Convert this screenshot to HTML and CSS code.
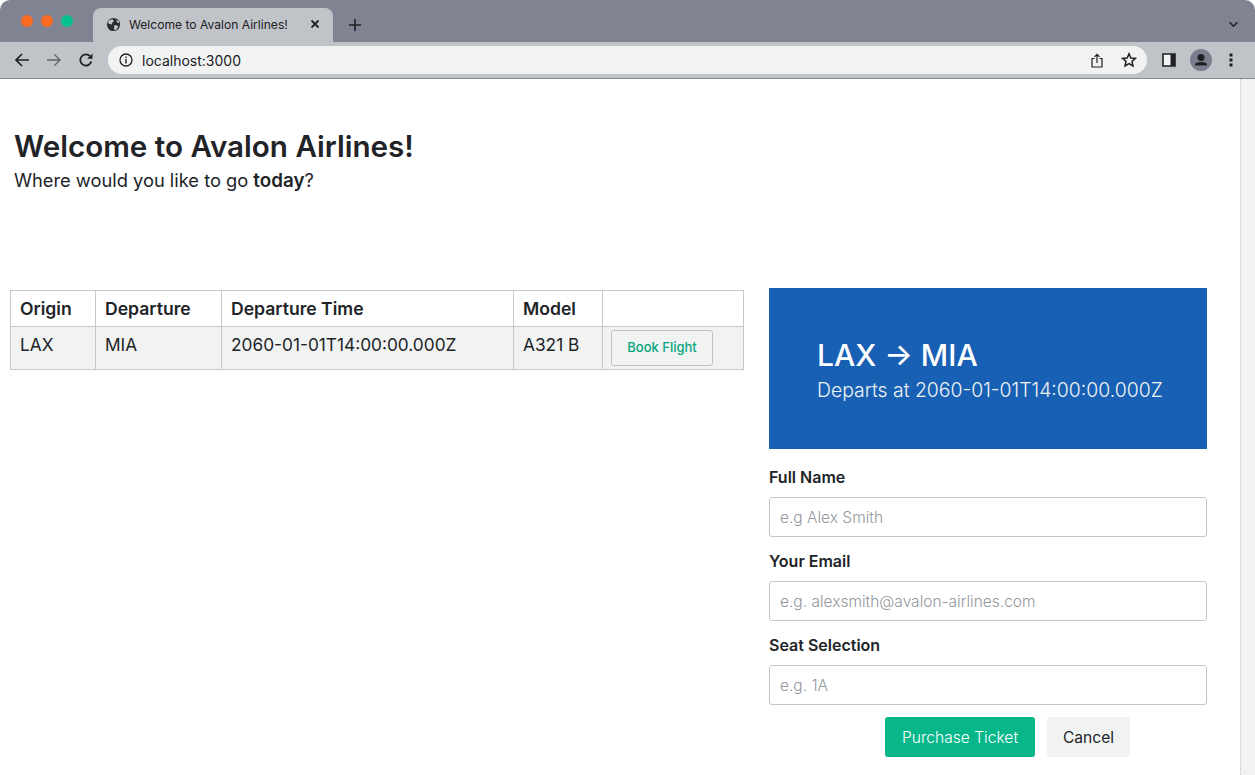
FILE: index.html
```html
<!DOCTYPE html>
<html lang="en">
<head>
<meta charset="utf-8">
<title>Welcome to Avalon Airlines!</title>
<link rel="stylesheet" href="styles.css">
</head>
<body>
<div class="window">
  <header class="chrome">
    <div class="tabstrip">
      <div class="lights"><span class="light orange"></span><span class="light orange"></span><span class="light green"></span></div>
      <div class="tab">
        <svg class="globe" viewBox="0 0 16 16"><circle cx="8" cy="8" r="7" fill="#2b2d30"/><path d="M3 3.500 7 2.500 8.500 4.500 6.500 6 6.500 8 3.500 7.500 2 6Z M9 8.500 12 9 13 10.500 11 13.500 9 14 8.500 11.500Z M11 3 13.500 4.500 14 6.500 12 6Z" fill="#c0c3c8"/></svg>
        <span class="tab-title">Welcome to Avalon Airlines!</span>
        <svg class="tab-close" viewBox="0 0 10 10"><path d="M1.500 1.500 8.500 8.500M8.500 1.500 1.500 8.500" stroke="#202124" stroke-width="1.800" fill="none"/></svg>
      </div>
      <svg class="newtab" viewBox="0 0 14 14"><path d="M7 1V13M1 7H13" stroke="#202124" stroke-width="1.600" fill="none"/></svg>
      <svg class="chevron" viewBox="0 0 12 8"><path d="M1.500 1.500 6 6 10.500 1.500" stroke="#202124" stroke-width="1.700" fill="none"/></svg>
    </div>
    <div class="toolbar">
      <svg class="navicon first" viewBox="0 0 16 16"><path d="M15 8H2M8 2 2 8 8 14" stroke="#202124" stroke-width="1.700" fill="none"/></svg>
      <svg class="navicon" viewBox="0 0 16 16"><path d="M1 8H14M8.500 2.500 14 8 8.500 13.500" stroke="#5f6368" stroke-width="1.300" fill="none"/></svg>
      <svg class="navicon" viewBox="0 0 16 16"><path d="M13.300 9.500A5.600 5.600 0 1 1 12 4.200" stroke="#202124" stroke-width="1.800" fill="none"/><path d="M14.500 1.500V6.800H9.200Z" fill="#202124"/></svg>
      <div class="omnibox">
        <svg class="info" viewBox="0 0 14 14"><circle cx="7" cy="7" r="6" stroke="#202124" stroke-width="1.300" fill="none"/><path d="M7 6V10.500M7 3.500V5" stroke="#202124" stroke-width="1.400" fill="none"/></svg>
        <span class="url">localhost:3000</span>
        <svg class="share" viewBox="0 0 12 15"><path d="M3.500 5.500H1V14H11V5.500H8.500M6 10V1.500M3.500 3.800 6 1.300 8.500 3.800" stroke="#202124" stroke-width="1.200" fill="none"/></svg>
        <svg class="star" viewBox="0 0 16 16"><path d="M8 1.800 9.800 6 14.500 6.400 11 9.400 12 14 8 11.600 4 14 5 9.400 1.500 6.400 6.200 6Z" stroke="#202124" stroke-width="1.500" fill="none"/></svg>
      </div>
      <svg class="panel" viewBox="0 0 14 14"><path d="M1 1H13V13H1Z" stroke="#202124" stroke-width="1.600" fill="#f1f3f3"/><path d="M8.500 1H13V13H8.500Z" fill="#202124"/></svg>
      <svg class="avatar" viewBox="0 0 22 22"><circle cx="11" cy="11" r="11" fill="#7a7f8e"/><circle cx="11" cy="8.500" r="3.500" fill="#202124"/><path d="M5 16.500C5 13.500 8 13 11 13S17 13.500 17 16.500Z" fill="#202124"/></svg>
      <svg class="menu" viewBox="0 0 4 14"><path d="M.5 .5H3.500V3.500H.5ZM.5 5.500H3.500V8.500H.5ZM.5 10.500H3.500V13.500H.5Z" fill="#202124"/></svg>
    </div>
  </header>
  <div class="viewport">
    <main class="page">
      <section class="hero">
        <h1 class="title">Welcome to Avalon Airlines!</h1>
        <p class="subtitle">Where would you like to go <strong>today</strong>?</p>
      </section>
      <div class="columns">
        <div class="flights">
          <table class="table">
            <colgroup><col class="c1"><col class="c2"><col class="c3"><col class="c4"><col class="c5"></colgroup>
            <thead><tr><th>Origin</th><th>Departure</th><th>Departure Time</th><th>Model</th><th></th></tr></thead>
            <tbody><tr><td>LAX</td><td>MIA</td><td>2060-01-01T14:00:00.000Z</td><td>A321 B</td><td class="action-cell"><button class="book" type="button">Book Flight</button></td></tr></tbody>
          </table>
        </div>
        <aside class="booking">
          <div class="banner">
            <h2 class="route">LAX → MIA</h2>
            <p class="departs">Departs at 2060-01-01T14:00:00.000Z</p>
          </div>
          <form class="form">
            <div class="field"><label class="label" for="n">Full Name</label><input id="n" class="input" placeholder="e.g Alex Smith"></div>
            <div class="field"><label class="label" for="e">Your Email</label><input id="e" class="input" placeholder="e.g. alexsmith@avalon-airlines.com"></div>
            <div class="field"><label class="label" for="s">Seat Selection</label><input id="s" class="input" placeholder="e.g. 1A"></div>
            <div class="actions"><button class="btn primary" type="button">Purchase Ticket</button><button class="btn light-btn" type="button">Cancel</button></div>
          </form>
        </aside>
      </div>
    </main>
    <div class="scrollbar"></div>
  </div>
</div>
</body>
</html>
```
FILE: styles.css
```css
* { box-sizing: border-box; }
html, body { margin: 0; padding: 0; background: #fff; }
body { font-family: Inter, "Liberation Sans", sans-serif; color: #212327; overflow: hidden; }
.window { width: 1255px; height: 775px; display: flex; flex-direction: column; overflow: hidden; }
.chrome { flex: none; height: 79px; display: flex; flex-direction: column; }
.tabstrip { height: 42px; flex: none; background: #7f8392; border-radius: 10px 10px 0 0; display: flex; align-items: flex-start; }
.lights { display: flex; gap: 8px; margin: 15px 0 0 21px; width: 72px; }
.light { width: 12px; height: 12px; border-radius: 50%; }
.orange { background: #fb6a22; }
.green { background-color: #07c08f; background-image: radial-gradient(#0b6f5a 35%, transparent 45%); background-size: 2px 2px; }
.tab { width: 240px; height: 34px; margin-top: 8px; background: #c0c3c8; border-radius: 8px 8px 0 0; display: flex; align-items: center; padding: 0 12px 2px 13px; }
.globe { width: 15px; height: 15px; flex: none; }
.tab-title { font: 12.1px "Inter", sans-serif; color: #202124; margin-left: 8px; flex: 1; white-space: nowrap; }
.tab-close { width: 10px; height: 10px; flex: none; margin-right: 1px; }
.newtab { width: 14px; height: 14px; margin: 18px 0 0 15px; }
.chevron { width: 11px; height: 7px; margin: 21px 0 0 866px; }
.toolbar { height: 37px; flex: none; background: #c0c3c8; border-bottom: 1px solid #85888f; display: flex; align-items: center; }
.navicon { width: 16px; height: 16px; margin-left: 16px; flex: none; }
.navicon.first { margin-left: 14px; }
.omnibox { width: 1039px; height: 28px; margin-left: 14px; background: #f1f3f3; border-radius: 14px; display: flex; align-items: center; padding: 0 8px 0 11px; }
.info { width: 14px; height: 14px; flex: none; }
.url { font: 14px Inter, sans-serif; color: #202124; margin-left: 9px; flex: 1; }
.share { width: 12px; height: 15px; margin-right: 18px; }
.star { width: 16px; height: 16px; margin-right: 2px; }
.panel { width: 14px; height: 14px; margin-left: 15px; flex: none; }
.avatar { width: 22px; height: 22px; margin-left: 14px; flex: none; }
.menu { width: 4px; height: 14px; margin-left: 17px; flex: none; }
.viewport { flex: 1; display: flex; min-height: 0; }
.page { flex: 1; min-width: 0; }
.scrollbar { width: 15px; flex: none; background: #f1f3f3; border-left: 1px dotted #c4c6c8; }
.hero { padding: 48px 14px 0; height: 209px; }
.title { margin: 0; font-size: 29.6px; line-height: 38px; font-weight: 600; color: #212327; }
.subtitle { margin: 1px 0 0; font-size: 18.3px; line-height: 28px; color: #212327; font-weight: 400; }
.subtitle strong { font-weight: 600; font-size: 18.8px; }
.columns { display: flex; align-items: flex-start; padding-left: 10px; }
.flights { width: 734px; flex: none; padding-top: 2px; }
.table { width: 733px; table-layout: fixed; border-collapse: collapse; }
.c1 { width: 85px; } .c2 { width: 126px; } .c3 { width: 292px; } .c4 { width: 89px; } .c5 { width: 141px; }
.table th, .table td { border: 1px solid #c6c8cc; padding: 0 9px; text-align: left; vertical-align: middle; }
.table th { height: 36px; font-size: 17.6px; font-weight: 600; color: #212327; padding-bottom: 0; }
.table td { height: 43px; font-size: 17.3px; background: #f1f3f3; padding-bottom: 8px; }
.table .action-cell { padding: 0 8px; }
.book { display: block; width: 102px; height: 36px; background: #f1f3f3; border: 1px solid #bdbfc3; border-radius: 3px; color: #06a57d; font: 500 13px Inter, sans-serif; padding: 0 0 2px; }
.booking { width: 438px; flex: none; margin-left: 25px; }
.banner { height: 161px; background: #1860b4; padding: 48px; color: #fff; }
.route { margin: 0; font-size: 30px; line-height: 38px; font-weight: 500; }
.departs { margin: 3px 0 0; font-size: 19.4px; line-height: 26px; font-weight: 300; color: #f1f3f3; white-space: nowrap; }
.form { display: flex; flex-direction: column; padding-top: 4px; }
.field { display: flex; flex-direction: column; flex: none; height: 84px; padding-top: 14px; }
.label { flex: none; font-size: 16px; line-height: 20px; font-weight: 600; color: #212327; height: 30px; }
.input { flex: none; height: 40px; width: 438px; border: 1px solid #c4c6ca; border-radius: 3px; padding: 0 10px; font: 300 15.5px Inter, sans-serif; }
.input::placeholder { color: #94979e; opacity: 1; }
.actions { display: flex; justify-content: flex-end; gap: 12px; margin-top: 12px; padding-right: 77px; }
.btn { height: 40px; border: 0; border-radius: 3px; font: 300 15.6px Inter, sans-serif; padding: 0; }
.primary { width: 150px; background: #07b78a; color: #fff; }
.light-btn { width: 83px; background: #f1f3f3; color: #212327; font-weight: 400; }
```
